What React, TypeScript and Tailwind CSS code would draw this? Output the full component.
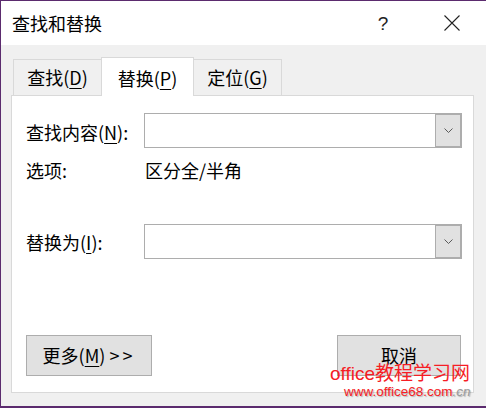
import React from 'react';

const ul = 'underline underline-offset-[3px] decoration-1';

function Combo() {
  return (
    <div className="flex-1 h-[35px] flex border border-[#adadad] bg-white">
      <div className="flex-1" />
      {/* drop-down button */}
      <div className="w-[26px] flex items-center justify-center bg-[#e1e1e1] border border-[#adadad]">
        <svg width="9" height="5" viewBox="0 0 9 5" fill="none">
          <path d="M0.5 0.5 L4.5 4.5 L8.5 0.5" stroke="#5a5a5a" strokeWidth="1" />
        </svg>
      </div>
    </div>
  );
}

export default function App() {
  return (
    <div className="relative w-[486px] h-[408px] flex flex-col bg-[#f0f0f0] border-t border-l border-b-2 border-[#5b2b6e] text-black text-[18px] font-['Noto_Sans_CJK_SC',sans-serif]">
      {/* Title bar */}
      <div className="h-[44px] flex items-center bg-white pl-[11px] pr-[11px]">
        <span className="leading-none">查找和替换</span>
        <div className="ml-auto flex items-center">
          <span className="w-[46px] mr-[23px] text-center text-[19px] font-light leading-none text-[#222] font-['Liberation_Sans',sans-serif]">?</span>
          <div className="w-[46px] flex justify-center">
            <svg width="16" height="16" viewBox="0 0 16 16" fill="none">
              <path d="M0.5 0.5 L15.5 15.5 M15.5 0.5 L0.5 15.5" stroke="#222" strokeWidth="1.1" />
            </svg>
          </div>
        </div>
      </div>

      {/* Tabs */}
      <div className="mt-[12px] h-[39px] -mb-px flex items-end pl-[12px]">
        <div className="w-[88px] h-[37px] flex items-center justify-center border-t border-l border-[#d9d9d9] bg-[#f0f0f0] pb-px">
          查找(<span className={ul}>D</span>)
        </div>
        <div className="relative z-10 w-[93px] h-[39px] flex items-center justify-center border-t border-x border-[#d9d9d9] bg-white pt-[2px]">
          替换(<span className={ul}>P</span>)
        </div>
        <div className="w-[88px] h-[37px] flex items-center justify-center border-t border-r border-[#d9d9d9] bg-[#f0f0f0] pb-px">
          定位(<span className={ul}>G</span>)
        </div>
      </div>

      {/* Panel */}
      <div className="ml-[10px] w-[463px] h-[298px] flex flex-col bg-white border border-[#d9d9d9] pl-[14px] pr-[11px]">
        <div className="mt-[17px] flex items-center">
          <span className="w-[118px] pt-[3px]">
            查找内容(<span className={ul}>N</span>):
          </span>
          <Combo />
        </div>

        <div className="mt-[8px] h-[28px] flex items-center">
          <span className="w-[119px]">选项:</span>
          <span>区分全/半角</span>
        </div>

        <div className="mt-[40px] flex items-center">
          <span className="w-[118px] pt-px">
            替换为(<span className={ul}>I</span>):
          </span>
          <Combo />
        </div>

        <div className="mt-[76px] flex justify-between">
          <button className="w-[126px] h-[41px] flex items-center justify-center bg-[#e1e1e1] border border-[#adadad]">
            更多(<span className={ul}>M</span>)&nbsp;<span className="tracking-[3px]">&gt;&gt;</span>
          </button>
          <button className="w-[124px] h-[41px] mr-px flex items-center justify-center bg-[#e1e1e1] border border-[#adadad]">
            取消
          </button>
        </div>
      </div>

      {/* Watermark overlay */}
      <div className="absolute left-[329px] top-[361px] leading-none text-[19px] text-[#f61d25] font-['Liberation_Sans','Noto_Sans_CJK_SC',sans-serif] whitespace-nowrap">
        office<span className="font-['Noto_Sans_CJK_SC',sans-serif]">教程学习网</span>
      </div>
      <div className="absolute left-[343px] top-[384px] leading-none text-[13.5px] text-[#f61d25] font-['Liberation_Sans',sans-serif] whitespace-nowrap [text-shadow:1px_1px_1px_rgba(0,0,0,0.25)]">
        www.office68.com<span className="italic text-[#9a9a9a]">.cn</span>
      </div>
    </div>
  );
}
